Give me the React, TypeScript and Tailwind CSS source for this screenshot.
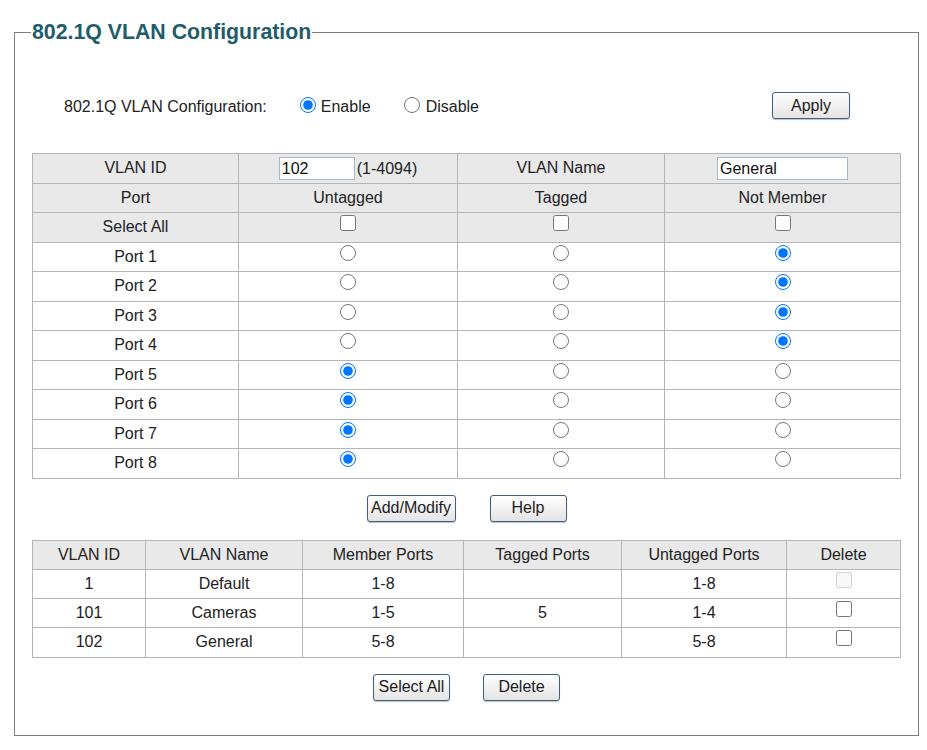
import React from "react";

type PortRow = {
  name: string;
  mode: "untagged" | "tagged" | "none";
};

type VlanRow = {
  id: string;
  name: string;
  members: string;
  tagged: string;
  untagged: string;
  locked?: boolean;
};

const ports: PortRow[] = [
  { name: "Port 1", mode: "none" },
  { name: "Port 2", mode: "none" },
  { name: "Port 3", mode: "none" },
  { name: "Port 4", mode: "none" },
  { name: "Port 5", mode: "untagged" },
  { name: "Port 6", mode: "untagged" },
  { name: "Port 7", mode: "untagged" },
  { name: "Port 8", mode: "untagged" },
];

const vlans: VlanRow[] = [
  { id: "1", name: "Default", members: "1-8", tagged: "", untagged: "1-8", locked: true },
  { id: "101", name: "Cameras", members: "1-5", tagged: "5", untagged: "1-4" },
  { id: "102", name: "General", members: "5-8", tagged: "", untagged: "5-8" },
];

const cell = "border border-[#b5b5b5] text-center align-middle p-0";
const grayCell = `${cell} bg-[#e9e9e9]`;
const radio = "m-0 w-[16px] h-[16px] align-[1px]";
const check = "m-0 w-[16px] h-[16px] align-[1px]";

const Btn = ({ label, width }: { label: string; width: string }) => (
  <button
    type="button"
    className={`${width} h-[27px] rounded-[3px] border border-[#3f5f80] bg-gradient-to-b from-white to-[#e4e4e4] text-[16px] text-[#1c1c1c] shadow-[0_1px_1px_rgba(0,0,0,0.25)]`}
  >
    {label}
  </button>
);

export default function App() {
  return (
    <div className="bg-white min-h-[750px] pt-[20px] font-['Liberation_Sans',Arial,sans-serif] text-[16px] text-[#222]">
      <fieldset className="ml-[14px] w-[905px] border border-[#7d7d7d] px-[17px] pb-[34px]">
        <legend className="-ml-[1px] px-[1px] text-[21.3px] leading-[24px] font-bold text-[#1d5d6c]">
          802.1Q VLAN Configuration
        </legend>

        <div className="mt-[49px] flex h-[27px] items-center pl-[32px] pr-[51px]">
          <span>802.1Q VLAN Configuration:</span>
          <label className="ml-[33px] flex items-center gap-[5px]">
            <input type="radio" name="mode" defaultChecked className="m-0 w-[16px] h-[16px] -translate-y-[2px]" />
            Enable
          </label>
          <label className="ml-[33px] flex items-center gap-[6px]">
            <input type="radio" name="mode" className="m-0 w-[16px] h-[16px] -translate-y-[2px]" />
            Disable
          </label>
          <div className="ml-auto -mt-[2px]">
            <Btn label="Apply" width="w-[78px]" />
          </div>
        </div>

        <table className="mt-[33px] w-[868px] table-fixed border-collapse">
          <colgroup>
            <col className="w-[206px]" />
            <col className="w-[219px]" />
            <col className="w-[207px]" />
            <col className="w-[236px]" />
          </colgroup>
          <tbody>
            <tr className="h-[29.5px]">
              <td className={grayCell}>VLAN ID</td>
              <td className={grayCell}>
                <input
                  defaultValue="102"
                  className="h-[23px] w-[76px] border border-[#a3b8ca] bg-white px-[2px] align-middle text-[16px] text-[#111]"
                />
                <span className="ml-[2px] align-middle">(1-4094)</span>
              </td>
              <td className={grayCell}>VLAN Name</td>
              <td className={grayCell}>
                <input
                  defaultValue="General"
                  className="h-[23px] w-[131px] border border-[#a3b8ca] bg-white px-[2px] align-middle text-[16px] text-[#111]"
                />
              </td>
            </tr>
            <tr className="h-[29.5px]">
              <td className={grayCell}>Port</td>
              <td className={grayCell}>Untagged</td>
              <td className={grayCell}>Tagged</td>
              <td className={grayCell}>Not Member</td>
            </tr>
            <tr className="h-[29.5px]">
              <td className={grayCell}>Select All</td>
              <td className={grayCell}><input type="checkbox" className={check} /></td>
              <td className={grayCell}><input type="checkbox" className={check} /></td>
              <td className={grayCell}><input type="checkbox" className={check} /></td>
            </tr>
            {ports.map((p, i) => (
              <tr key={p.name} className="h-[29.5px]">
                <td className={cell}>{p.name}</td>
                <td className={cell}>
                  <input type="radio" name={`p${i}`} defaultChecked={p.mode === "untagged"} className={radio} />
                </td>
                <td className={cell}>
                  <input type="radio" name={`p${i}`} defaultChecked={p.mode === "tagged"} className={radio} />
                </td>
                <td className={cell}>
                  <input type="radio" name={`p${i}`} defaultChecked={p.mode === "none"} className={radio} />
                </td>
              </tr>
            ))}
          </tbody>
        </table>

        <div className="mt-[16px] flex justify-center gap-[34px]">
          <Btn label="Add/Modify" width="w-[89px]" />
          <Btn label="Help" width="w-[77px]" />
        </div>

        <table className="mt-[18px] w-[868px] table-fixed border-collapse">
          <colgroup>
            <col className="w-[113px]" />
            <col className="w-[157px]" />
            <col className="w-[161px]" />
            <col className="w-[158px]" />
            <col className="w-[165px]" />
            <col className="w-[114px]" />
          </colgroup>
          <tbody>
            <tr className="h-[29.25px]">
              <td className={grayCell}>VLAN ID</td>
              <td className={grayCell}>VLAN Name</td>
              <td className={grayCell}>Member Ports</td>
              <td className={grayCell}>Tagged Ports</td>
              <td className={grayCell}>Untagged Ports</td>
              <td className={grayCell}>Delete</td>
            </tr>
            {vlans.map((v) => (
              <tr key={v.id} className="h-[29.25px]">
                <td className={cell}>{v.id}</td>
                <td className={cell}>{v.name}</td>
                <td className={cell}>{v.members}</td>
                <td className={cell}>{v.tagged}</td>
                <td className={cell}>{v.untagged}</td>
                <td className={cell}>
                  <input type="checkbox" disabled={v.locked} className={check} />
                </td>
              </tr>
            ))}
          </tbody>
        </table>

        <div className="mt-[16px] flex justify-center gap-[33px]">
          <Btn label="Select All" width="w-[77px]" />
          <Btn label="Delete" width="w-[77px]" />
        </div>
      </fieldset>
    </div>
  );
}
